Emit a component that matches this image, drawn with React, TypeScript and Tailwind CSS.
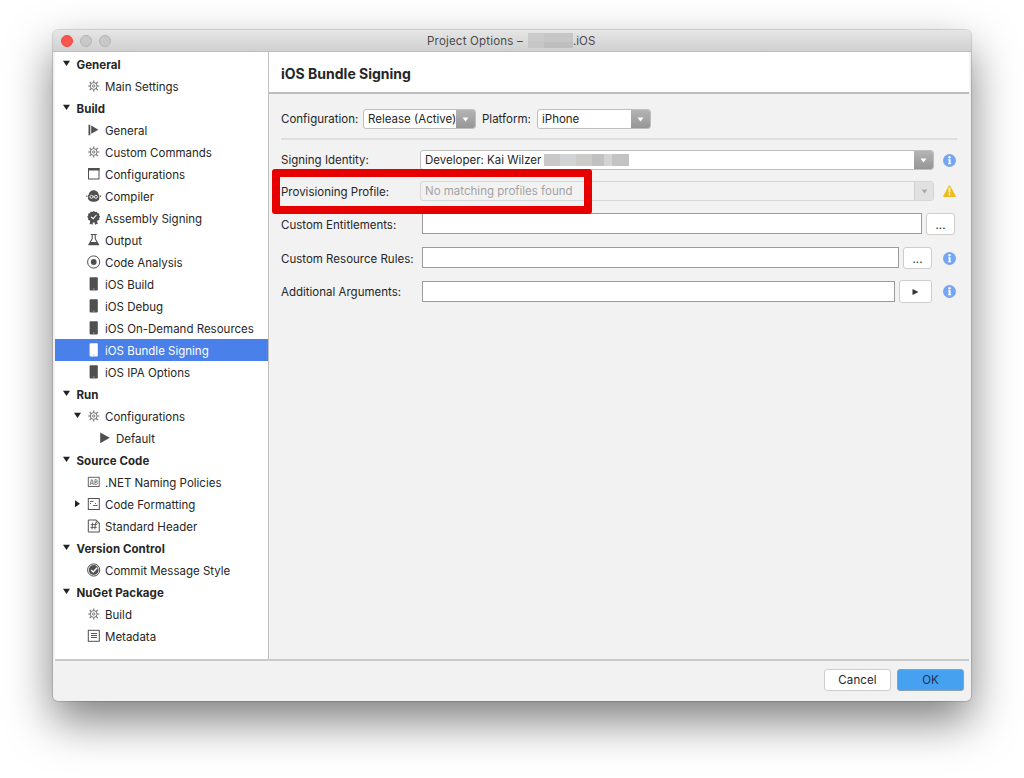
import React from 'react';

const DARK = '#505050';

function Icon({ name }: { name: string }) {
  switch (name) {
    case 'gear':
      return <svg width="14" height="14" viewBox="0 0 14 14" fill="none" stroke="#777" strokeWidth="1">
        <circle cx="6.7" cy="7" r="3.4" />
        <circle cx="6.7" cy="7" r="1.2" />
        <path d="M6.7 1.4v2.2M6.7 10.4v2.2M1.1 7h2.2M10.1 7h2.2M2.7 3l1.6 1.6M9.1 9.4l1.6 1.6M2.7 11l1.6-1.6M9.1 4.6l1.6-1.6" strokeWidth="1.2" />
      </svg>;
    case 'step':
      return <svg width="14" height="14" viewBox="0 0 14 14" fill={DARK}>
        <path d="M1.5 1.8h1.8v10.4H1.5zM4.2 2.4 11.4 6.8 4.2 10.8z" />
      </svg>;
    case 'window':
      return <svg width="14" height="14" viewBox="0 0 14 14">
        <rect x="1.5" y="1.5" width="10.5" height="10.5" fill="#fff" stroke={DARK} />
        <path d="M1 1h11.5v2.5H1z" fill={DARK} />
      </svg>;
    case 'robot':
      return <svg width="16" height="14" viewBox="0 0 16 14">
        <path d="M2.6 6.5C2.6 3.8 4.8 1.3 7.7 1.3s5.1 2.5 5.1 5.2z" fill={DARK} />
        <path d="M2.1 6h11.2v3.4c0 1.8-2.4 3.4-5.6 3.4s-5.6-1.6-5.6-3.4z" fill={DARK} />
        <path d="M.4 6.4h1v1.6h-1zM14.1 6.4h1v1.6h-1z" fill={DARK} />
        <circle cx="5.5" cy="7.8" r="1.5" fill={DARK} stroke="#fff" strokeWidth=".9" />
        <circle cx="9.9" cy="7.8" r="1.5" fill={DARK} stroke="#fff" strokeWidth=".9" />
        <path d="M7 7.8h1.6" stroke="#fff" strokeWidth=".8" />
      </svg>;
    case 'badge':
      return <svg width="14" height="14" viewBox="0 0 14 14">
        <path d="M3.8 9h2.6l-1 5-1.2-1-1.7.3zM9.6 9H7l1 5 1.2-1 1.7.3z" fill={DARK} />
        <path d="M6.7 0l1.4 1 1.7-.3.8 1.5 1.7.6-.1 1.7 1 1.3-1 1.3.1 1.7-1.7.6-.8 1.5-1.7-.2-1.4 1-1.4-1-1.7.2-.8-1.5-1.7-.6.1-1.7-1-1.3 1-1.3L1.1 2.8l1.7-.6.8-1.5 1.7.3z" fill={DARK} />
        <path d="M4.1 5.8l2 1.9L9.5 4" fill="none" stroke="#fff" strokeWidth="1.1" />
      </svg>;
    case 'flask':
      return <svg width="14" height="14" viewBox="0 0 14 14">
        <path d="M3.7 1.5h6M5.2 1.5v4.2L2 11.5h9.4L8.2 5.7V1.5" fill="none" stroke={DARK} strokeWidth="1.1" />
        <path d="M3.2 9h7l1.7 3.2H1.5z" fill={DARK} />
      </svg>;
    case 'target':
      return <svg width="14" height="14" viewBox="0 0 14 14">
        <circle cx="6.7" cy="7" r="6.1" fill="#fff" stroke={DARK} strokeWidth="1" />
        <circle cx="6.7" cy="7" r="2.9" fill={DARK} />
      </svg>;
    case 'phone':
    case 'phone-white':
      return <svg width="14" height="14" viewBox="0 0 14 14">
        <rect x="2.6" y=".2" width="8.2" height="13.2" rx=".8" fill={name === 'phone' ? DARK : '#fff'} />
        <path d="M5.9 12.1h1.6" stroke={name === 'phone' ? '#bbb' : '#9db9f3'} strokeWidth=".8" />
      </svg>;
    case 'play':
      return <svg width="14" height="14" viewBox="0 0 14 14" fill={DARK}>
        <path d="M2.2 1.4 11.8 6.8 2.2 12.2z" />
      </svg>;
    case 'naming':
      return <svg width="14" height="14" viewBox="0 0 14 14" fill="none" stroke="#777">
        <rect x="1.3" y="2.3" width="10.9" height="9.2" stroke="#666" />
        <path d="M3.1 10l1.3-5.2h1L6.4 10M3.3 8.3h2.8M7.9 4.6v5.1h1.4c1.5 0 1.5-2.6 0-2.6H7.9h1.3c1.4 0 1.4-2.4 0-2.4z" strokeWidth=".9" />
      </svg>;
    case 'format':
      return <svg width="14" height="14" viewBox="0 0 14 14" fill="none" stroke={DARK}>
        <rect x="1.3" y="1.5" width="11" height="11" />
        <path d="M3 4.5h3.5M3 6.5h1M6 8.5h4.5M8 6.5h1" strokeWidth=".9" />
      </svg>;
    case 'hash':
      return <svg width="14" height="14" viewBox="0 0 14 14" fill="none" stroke={DARK}>
        <path d="M1.3 1h8l3 3v9h-11z" />
        <path d="M9.3 1v3h3" strokeWidth=".8" />
        <path d="M5.7 3.6 5 10.4M8.5 3.6l-.7 6.8M3.7 5.6h6.2M3.5 8.4h6.2" strokeWidth=".9" />
      </svg>;
    case 'check':
      return <svg width="14" height="14" viewBox="0 0 14 14">
        <circle cx="6.7" cy="7" r="6.1" fill="#fff" stroke={DARK} strokeWidth="1" />
        <circle cx="6.7" cy="7" r="4.9" fill={DARK} />
        <path d="M4.2 7.1l2 1.8 4-4.2" fill="none" stroke="#fff" strokeWidth="1.4" />
      </svg>;
    default:
      return <svg width="14" height="14" viewBox="0 0 14 14" fill="none" stroke={DARK}>
        <rect x="1.3" y="1.3" width="11" height="11" />
        <path d="M4 4.5h6M4 6.5h6M4 8.5h6" strokeWidth="1" />
      </svg>;
  }
}

type Row = { label: string; icon?: string; level: number; arrow?: 'down' | 'right' };

const rows: Row[] = [
  { label: 'General', level: 0, arrow: 'down' },
  { label: 'Main Settings', level: 1, icon: 'gear' },
  { label: 'Build', level: 0, arrow: 'down' },
  { label: 'General', level: 1, icon: 'step' },
  { label: 'Custom Commands', level: 1, icon: 'gear' },
  { label: 'Configurations', level: 1, icon: 'window' },
  { label: 'Compiler', level: 1, icon: 'robot' },
  { label: 'Assembly Signing', level: 1, icon: 'badge' },
  { label: 'Output', level: 1, icon: 'flask' },
  { label: 'Code Analysis', level: 1, icon: 'target' },
  { label: 'iOS Build', level: 1, icon: 'phone' },
  { label: 'iOS Debug', level: 1, icon: 'phone' },
  { label: 'iOS On-Demand Resources', level: 1, icon: 'phone' },
  { label: 'iOS Bundle Signing', level: 1, icon: 'phone-white' },
  { label: 'iOS IPA Options', level: 1, icon: 'phone' },
  { label: 'Run', level: 0, arrow: 'down' },
  { label: 'Configurations', level: 1, icon: 'gear', arrow: 'down' },
  { label: 'Default', level: 2, icon: 'play' },
  { label: 'Source Code', level: 0, arrow: 'down' },
  { label: '.NET Naming Policies', level: 1, icon: 'naming' },
  { label: 'Code Formatting', level: 1, icon: 'format', arrow: 'right' },
  { label: 'Standard Header', level: 1, icon: 'hash' },
  { label: 'Version Control', level: 0, arrow: 'down' },
  { label: 'Commit Message Style', level: 1, icon: 'check' },
  { label: 'NuGet Package', level: 0, arrow: 'down' },
  { label: 'Build', level: 1, icon: 'gear' },
  { label: 'Metadata', level: 1, icon: 'list' },
];

const indents = ['pl-[7px]', 'pl-[18px]', 'pl-[29px]'];

function TreeRow({ row }: { row: Row }) {
  const selected = row.icon === 'phone-white';
  return <div className={`flex h-[22px] items-center whitespace-nowrap ${indents[row.level]} ${selected ? 'bg-[#4a80ea] text-white' : ''}`}>
    <span className="flex w-[10px] shrink-0">
      {row.arrow && <svg width="9" height="8" viewBox="0 0 9 8" fill="#222">
        {row.arrow === 'down' ? <path d="M1 .8h7L4.5 6z" /> : <path d="M2 .2v7L7 3.7z" />}
      </svg>}
    </span>
    {row.icon
      ? <>
        <span className="flex w-[22px] shrink-0 items-center justify-center">
          <Icon name={row.icon} />
        </span>
        <span className="pt-[3px]">{row.label}</span>
      </>
      : <span className="pl-[4.5px] pt-[3px] font-bold tracking-[0.06px]">{row.label}</span>}
  </div>;
}

function Combo({ text, className, disabled, children }: { text: string; className: string; disabled?: boolean; children?: React.ReactNode }) {
  return <div className={`flex h-[20px] overflow-hidden rounded-[3px] border ${disabled ? 'border-[#d6d6d6] bg-[#f2f2f2] text-[#a3a3a3]' : 'border-[#bfbfbf] bg-white'} ${className}`}>
    <div className="flex min-w-0 flex-1 items-center whitespace-nowrap pl-1">
      <span className="pt-[2px]">{text}</span>
      {children}
    </div>
    <div className={`flex w-[19px] shrink-0 items-center justify-center ${disabled ? 'border-l border-[#d0d0d0] bg-[#e1e1e1]' : 'bg-linear-to-b from-[#b4b4b4] to-[#969696]'}`}>
      <svg width="7" height="5" viewBox="0 0 7 5" fill={disabled ? '#aaa' : '#fff'}><path d="M.5.5h6l-3 4z" /></svg>
    </div>
  </div>;
}

function Info() {
  return <svg width="13" height="13" viewBox="0 0 13 13">
    <circle cx="6.5" cy="6.5" r="6.5" fill="#76a6f2" />
    <circle cx="6.5" cy="3.3" r="1.2" fill="#fff" />
    <path d="M5.1 5.2h2.5v4.1h.5v1H5v-1h.7V6.2h-.6z" fill="#fff" />
  </svg>;
}

function Warning() {
  return <svg width="13" height="12" viewBox="0 0 13 12">
    <path d="M6.5.8 12.3 11.3H.7z" fill="#f0bd1c" stroke="#f0bd1c" strokeWidth="1.2" strokeLinejoin="round" />
    <path d="M5.6 2.8h1.8L7.1 7.8H5.9zM5.7 8.6h1.6v1.6H5.7z" fill="#fff" />
  </svg>;
}

const btn = 'flex items-center justify-center rounded-[3px] border border-[#cdcdcd] bg-white';

export default function App() {
  return <div className="h-[778px] w-[1024px] overflow-hidden bg-white pl-[53px] pt-[30px] font-['Inter','Liberation_Sans',sans-serif] text-[11.5px] leading-none text-[#262626]">
    <div className="relative flex h-[671px] w-[918px] flex-col rounded-[5px] bg-[#f2f2f2] shadow-[0_0_0_1px_rgba(0,0,0,0.13),0_20px_45px_rgba(0,0,0,0.5)]">
      {/* Title bar */}
      <div className="flex h-[22px] shrink-0 items-center rounded-t-[5px] border-b border-[#bdbdbd] bg-linear-to-b from-[#e6e6e6] to-[#d0d0d0] pl-2 text-[#4a4a4a]">
        <div className="flex w-[366px] gap-[7px]">
          <span className="size-3 rounded-full border border-[#f0473f] bg-[#fc5550]" />
          <span className="size-3 rounded-full border border-[#b4b4b4] bg-[#c8c8c8]" />
          <span className="size-3 rounded-full border border-[#b4b4b4] bg-[#c8c8c8]" />
        </div>
        <span className="w-[101px] whitespace-nowrap pt-[3px] tracking-[0.2px]">Project Options –</span>
        <span className="flex h-[15px] w-[45px] bg-[#c6c6c6]">
          <span className="h-2 w-4 self-start bg-[#cbcbcb]" />
          <span className="h-[6px] flex-1 self-end bg-[#bebebe]" />
        </span>
        <span className="pt-[3px]">.iOS</span>
      </div>

      <div className="flex h-[607px] shrink-0 px-[2px]">
        {/* Sidebar */}
        <div className="w-[214px] shrink-0 border-r border-[#c0c0c0] bg-white pt-px">
          {rows.map((row, i) => <TreeRow key={i} row={row} />)}
        </div>

        {/* Options panel */}
        <div className="flex min-w-0 flex-1 flex-col">
          <div className="flex h-[42px] items-center border-b-2 border-[#bcbcbc] bg-white pl-3 pt-[3px] text-[14px] font-bold">
            iOS Bundle Signing
          </div>
          <div className="flex flex-col pl-3 pr-3 pt-[15px]">
            <div className="flex h-[20px] items-center">
              <span className="w-[82px] whitespace-nowrap pt-[2px]">Configuration:</span>
              <Combo text="Release (Active)" className="w-[113px]" />
              <span className="ml-[6px] w-[55px] pt-[2px]">Platform:</span>
              <Combo text="iPhone" className="w-[114px]" />
            </div>
            <div className="mt-[9px] h-[2px] bg-[#dedede]" />

            <div className="mt-[10px] flex h-[20px] items-center">
              <span className="w-[139px] pt-[2px]">Signing Identity:</span>
              <Combo text="Developer: Kai Wilzer" className="w-[514px]">
                <span className="ml-[3px] flex h-[12px] w-[85px]">
                  <span className="w-4 bg-[#c8c8c8]" />
                  <span className="w-4 bg-[#d2d4d6]" />
                  <span className="w-4 bg-[#cbcbc8]" />
                  <span className="w-3 bg-[#c1c1c1]" />
                  <span className="w-2 bg-[#d3d3d3]" />
                  <span className="flex-1 bg-[#c3c3c3]" />
                </span>
              </Combo>
              <span className="ml-[9px]"><Info /></span>
            </div>

            <div className="mt-[11px] flex h-[20px] items-center">
              <span className="w-[139px] pt-[3px]">Provisioning Profile:</span>
              <Combo text="No matching profiles found" className="w-[514px]" disabled />
              <span className="ml-[9px]"><Warning /></span>
            </div>

            <div className="mt-[12px] flex h-[22px] items-center">
              <span className="w-[141px] pt-[3px]">Custom Entitlements:</span>
              <div className="mb-px h-[21px] w-[500px] border border-[#9b9b9b] bg-white" />
              <div className={`${btn} ml-1 h-[22px] w-[29px] pt-1`}>...</div>
            </div>

            <div className="mt-[12px] flex h-[22px] items-center">
              <span className="w-[141px] whitespace-nowrap pt-[3px]">Custom Resource Rules:</span>
              <div className="mb-px h-[21px] w-[477px] border border-[#9b9b9b] bg-white" />
              <div className={`${btn} ml-1 h-[22px] w-[29px] pt-1`}>...</div>
              <span className="ml-[11px]"><Info /></span>
            </div>

            <div className="mt-[11px] flex h-[23px] items-center">
              <span className="w-[141px] pt-[3px]">Additional Arguments:</span>
              <div className="h-[21px] w-[473px] border border-[#9b9b9b] bg-white" />
              <div className={`${btn} ml-1 h-[23px] w-[33px]`}>
                <svg width="7" height="6" viewBox="0 0 7 6" fill="#333"><path d="M.5 0 6.5 3l-6 3z" /></svg>
              </div>
              <span className="ml-[11px]"><Info /></span>
            </div>
          </div>
        </div>
      </div>

      {/* Footer */}
      <div className="mx-[2px] flex flex-1 items-center justify-end gap-[6px] border-t-2 border-[#c9c9c9] pr-[5px] pb-[2px]">
        <div className={`${btn} h-[22px] w-[67px] pt-[2px] tracking-[0.1px]`}>Cancel</div>
        <div className="flex h-[22px] w-[67px] items-center justify-center rounded-[3px] border border-[#8c9fb3] bg-[#46a2f1] pt-[2px] text-[#1f2f55]">OK</div>
      </div>

      {/* Highlight frame */}
      <div className="absolute left-[219px] top-[139px] h-[45px] w-[320px] rounded-[3px] border-8 border-[#e60000]" />
    </div>
  </div>;
}
